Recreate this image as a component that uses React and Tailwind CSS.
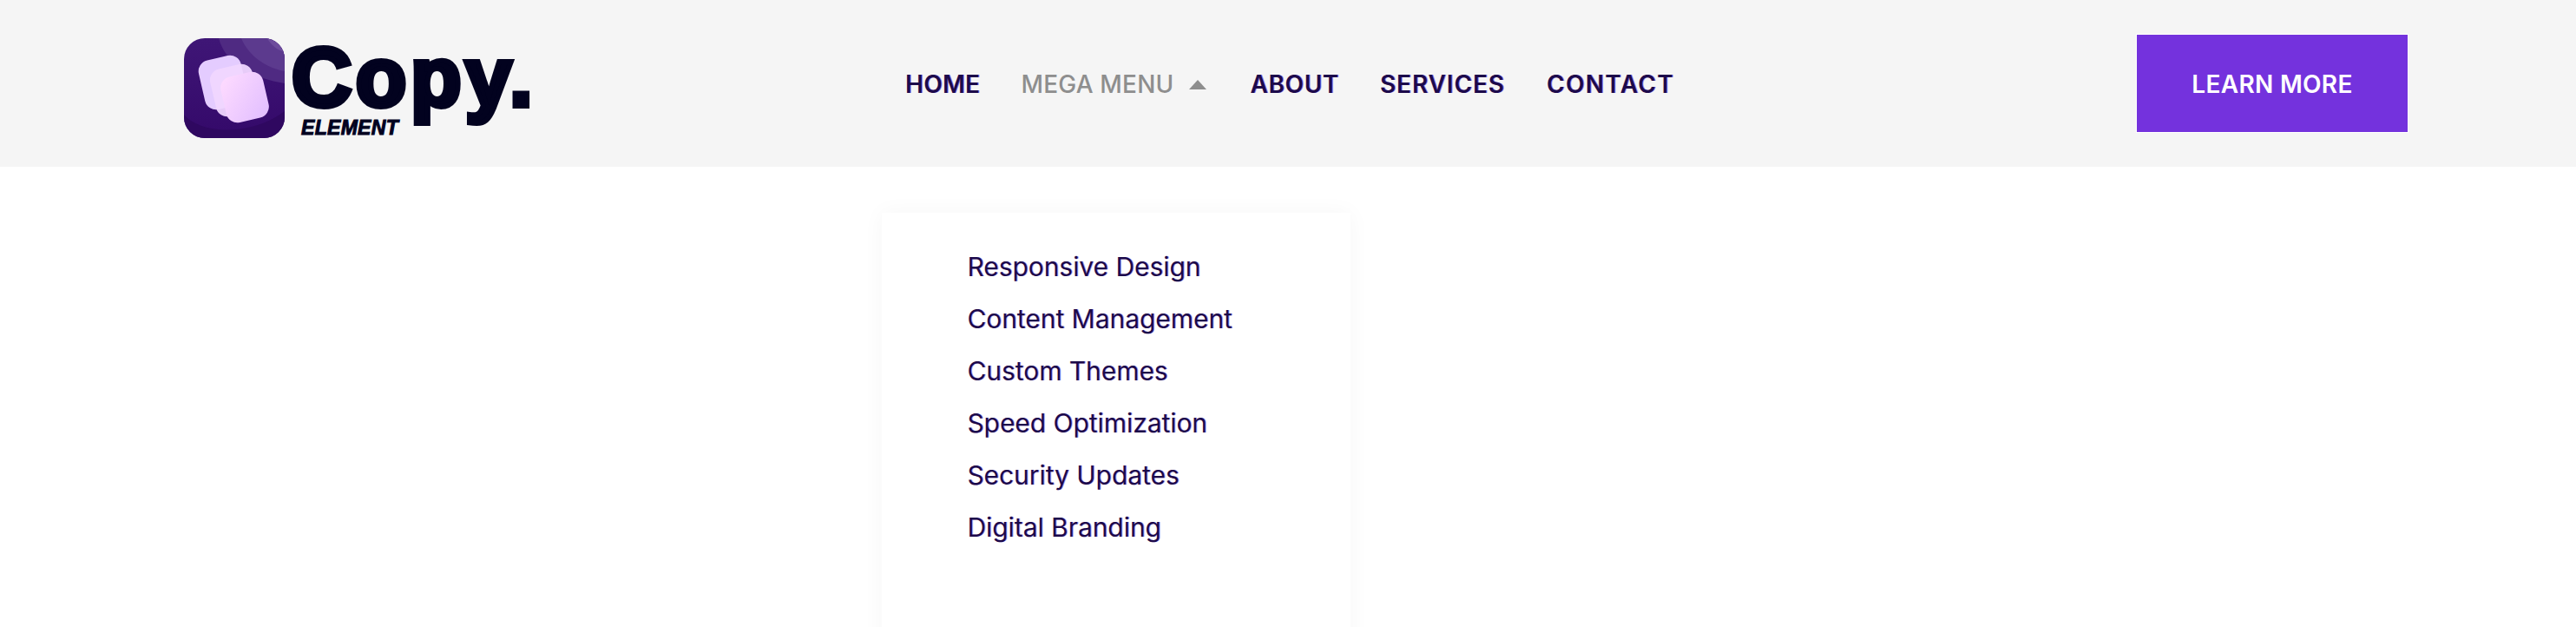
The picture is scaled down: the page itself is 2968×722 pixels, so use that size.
import React from 'react'

const navText = 'text-[#1c0a4a] [text-shadow:1px_0_0_rgba(109,40,217,0.6)]'

const menuItems = [
    'Responsive Design',
    'Content Management',
    'Custom Themes',
    'Speed Optimization',
    'Security Updates',
    'Digital Branding'
]

const LogoMark = () => (
    <svg width="116" height="115" viewBox="0 0 116 115" className="shrink-0">
        <defs>
            <linearGradient id="tile" x1="0" y1="0" x2="0" y2="1">
                <stop offset="0" stopColor="#3f1676" />
                <stop offset="1" stopColor="#34096a" />
            </linearGradient>
            <linearGradient id="front" x1="0" y1="0" x2="1" y2="1">
                <stop offset="0" stopColor="#ffdcff" />
                <stop offset="1" stopColor="#e0bdff" />
            </linearGradient>
            <clipPath id="tileClip">
                <rect width="116" height="115" rx="24" />
            </clipPath>
        </defs>
        <g clipPath="url(#tileClip)">
            <rect width="116" height="115" fill="url(#tile)" />
            <path d="M40 0C48 30 78 46 116 52V0Z" fill="#4f2a82" />
            <path d="M66 0C74 20 94 34 116 38V0Z" fill="#5c3a8e" />
            <path d="M96 0C100 8 108 14 116 16V0Z" fill="#6d4c9c" />
            <path d="M0 88C20 112 80 112 116 84V115H0Z" fill="#2f0860" />
        </g>
        <g transform="rotate(-13 45 51)">
            <rect x="20" y="22" width="50" height="58" rx="13" fill="#e4ccff" />
        </g>
        <g transform="rotate(-13 58 60)">
            <rect x="33" y="32" width="50" height="56" rx="13" fill="#f0d6ff" opacity="0.95" />
        </g>
        <g transform="rotate(-13 70 68)">
            <rect x="45" y="41" width="50" height="54" rx="13" fill="url(#front)" />
        </g>
    </svg>
)

const App = () => {
    return (
        <div className="relative h-[722px] w-[2968px] overflow-hidden bg-white font-['Inter',sans-serif]">
            <header className="flex h-[192px] items-center bg-[#f5f5f5] pl-[212px] pr-[194px]">
                {/* Logo */}
                <a className="mt-[11px] flex w-[396px] shrink-0 items-center gap-[6px]">
                    <LogoMark />
                    <div className="relative h-[115px] w-[274px]">
                        <span className="absolute left-[2px] top-[3px] font-['Liberation_Sans',sans-serif] text-[96px] font-bold leading-[84px] tracking-[4.5px] text-[#02021f] [-webkit-text-stroke:6px_#02021f]">
                            Copy.
                        </span>
                        <span className="absolute left-[13px] top-[89px] font-['Liberation_Sans',sans-serif] text-[23px] font-bold italic leading-[28px] tracking-[0.3px] text-[#02021f] [-webkit-text-stroke:1px_#02021f]">
                            ELEMENT
                        </span>
                    </div>
                </a>

                {/* Nav */}
                <nav className="ml-[435px] mt-[2px] flex items-center text-[28px] font-semibold leading-none">
                    <a className={`${navText} tracking-[0.3px]`}>HOME</a>
                    <a className="relative ml-[47px] flex items-center gap-[17px] font-medium tracking-[0.2px] text-[#8e8e8e]">
                        <span>MEGA MENU</span>
                        <span className="h-0 w-0 border-x-[10px] border-b-[11px] border-x-transparent border-b-[#8e8e8e]"></span>
                        <div className="absolute left-[-160px] top-[162px] h-[600px] w-[540px] bg-white pl-[98px] pt-[32px] shadow-[0_0_24px_rgba(0,0,0,0.04)]">
                            <ul className="flex flex-col">
                                {menuItems.map(item => (
                                    <li key={item} className="h-[60px] text-[30px] font-normal leading-[60px] tracking-[-0.05px] text-[#1c0a4a] [text-shadow:1px_0_0_rgba(109,40,217,0.45)]">
                                        {item}
                                    </li>
                                ))}
                            </ul>
                        </div>
                    </a>
                    <a className={`${navText} ml-[51px] tracking-[0.6px]`}>ABOUT</a>
                    <a className={`${navText} ml-[47px] tracking-[0.9px]`}>SERVICES</a>
                    <a className={`${navText} ml-[48px] tracking-[1.3px]`}>CONTACT</a>
                </nav>

                <button className="ml-auto h-[112px] w-[312px] bg-[#7432dd] pt-[1px] text-[28px] font-semibold tracking-[0.3px] text-white shadow-[0_0_0_1px_#ffffff]">
                    LEARN MORE
                </button>
            </header>
        </div>
    )
}

export default App
